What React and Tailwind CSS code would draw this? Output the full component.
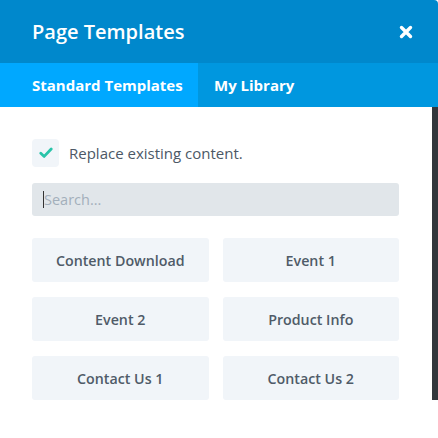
import React, { useState } from "react";

const templates = [
  "Content Download",
  "Event 1",
  "Event 2",
  "Product Info",
  "Contact Us 1",
  "Contact Us 2",
];

const CloseIcon = () => (
  <svg width="14" height="14" viewBox="0 0 14 14" aria-hidden="true">
    <path d="M2.5 2.5 L11.5 11.5 M11.5 2.5 L2.5 11.5" stroke="#fff" strokeWidth="3.4" strokeLinecap="round" />
  </svg>
);

const CheckIcon = () => (
  <svg width="14" height="12" viewBox="0 0 14 12" aria-hidden="true">
    <path d="M1.8 6.2 L5.2 9.4 L12.2 2" fill="none" stroke="#29c4a9" strokeWidth="2.8" strokeLinecap="round" strokeLinejoin="round" />
  </svg>
);

const App = () => {
  const [tab, setTab] = useState("standard");
  const [replace, setReplace] = useState(true);

  return (
    <div className="w-[438px] h-[438px] bg-white overflow-hidden" style={{ fontFamily: '"Open Sans", "Liberation Sans", sans-serif' }}>
      {/* Header */}
      <div className="h-[63px] bg-[#0088cc] rounded-tr-[4px] flex items-center justify-between pl-8 pr-[25px]">
        <h1 className="text-white text-[20px] font-semibold leading-none">Page Templates</h1>
        <button className="flex items-center justify-center" aria-label="Close">
          <CloseIcon />
        </button>
      </div>

      {/* Tabs */}
      <div className="h-[44px] bg-[#0097df] flex">
        <button
          onClick={() => setTab("standard")}
          className={`w-[198px] pl-8 text-left text-white text-[15px] font-bold ${tab === "standard" ? "bg-[#00a8ff]" : ""}`}
        >
          Standard Templates
        </button>
        <button
          onClick={() => setTab("library")}
          className={`px-4 text-white text-[15px] font-bold ${tab === "library" ? "bg-[#00a8ff]" : ""}`}
        >
          My Library
        </button>
      </div>

      {/* Body */}
      <div className="flex">
        <div className="flex-1 pl-8 pr-[33px] pt-8">
          <label className="flex items-center gap-[10px] cursor-pointer">
            <button
              onClick={() => setReplace(!replace)}
              className="w-[27px] h-[28px] rounded-[4px] bg-[#f1f5f9] flex items-center justify-center"
            >
              {replace && <CheckIcon />}
            </button>
            <span className="text-[15px] text-[#4c5866]">Replace existing content.</span>
          </label>

          <div className="relative mt-4">
            <input
              type="text"
              placeholder="Search..."
              className="w-full h-[33px] rounded-[3px] bg-[#e1e6ea] pl-3 text-[14.5px] text-[#4c5866] placeholder:text-[#a3afbb] outline-none"
            />
            <span className="absolute left-[11px] top-[8px] w-px h-[17px] bg-[#333]" />
          </div>

          <div className="grid grid-cols-2 gap-x-[14px] gap-y-[15px] mt-[22px]">
            {templates.map((t) => (
              <button
                key={t}
                className="h-[44px] pt-px rounded-[3px] bg-[#f1f5f9] text-[14.25px] font-semibold text-[#4f5b68]"
              >
                {t}
              </button>
            ))}
          </div>
        </div>
        <div className="w-[6px] h-[293px] bg-[#32373c]" />
      </div>
    </div>
  );
};

export default App;
